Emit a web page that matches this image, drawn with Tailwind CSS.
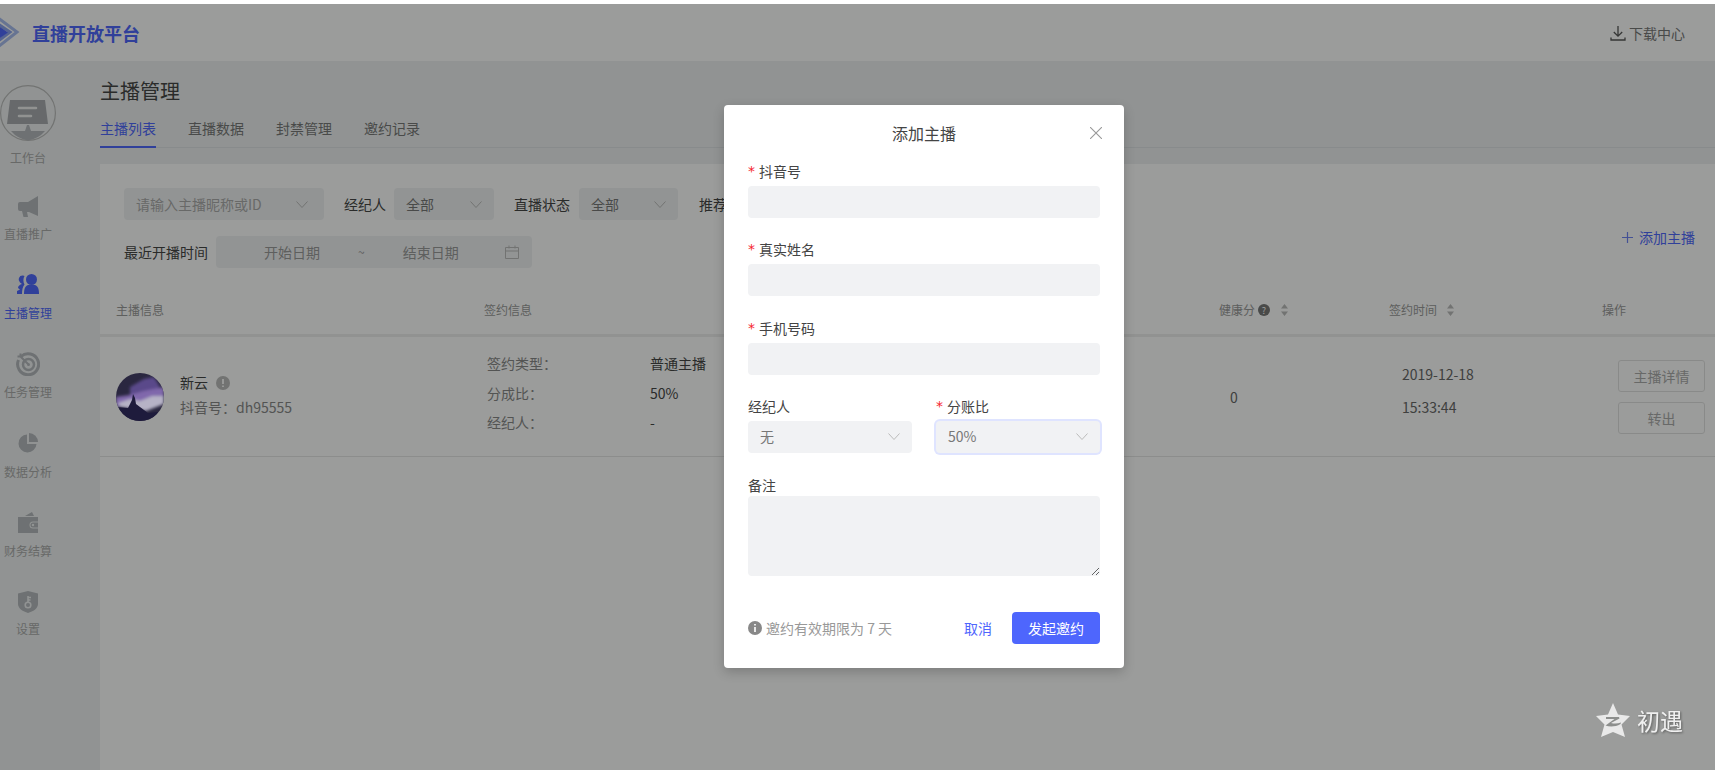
<!DOCTYPE html>
<html lang="zh-CN">
<head>
<meta charset="utf-8">
<title>直播开放平台</title>
<script src="https://cdn.jsdelivr.net/npm/@tailwindcss/browser@4"></script>
</head>
<body class="overflow-hidden bg-white font-['Noto_Sans_CJK_SC',sans-serif] text-sm text-[#444]">
<div class="relative mt-1 h-[766px] overflow-hidden bg-[#eef1f2]">

  <!-- header -->
  <header class="flex h-[57px] items-center bg-white">
    <svg class="h-[32px] w-[20px] shrink-0" viewBox="0 0 20 32" fill="none">
      <path d="M-2 1 L17 15 L-2 30" stroke="#a9bdf0" stroke-width="3"/>
      <path d="M-2 7 L10 15 L-2 24" stroke="#8aa2ee" stroke-width="3"/>
      <path d="M0 10 L8 15.500 L0 21z" fill="#4e66fd"/>
    </svg>
    <span class="ml-3 text-lg leading-none font-bold text-[#4e66fd]">直播开放平台</span>
    <div class="mr-[30px] ml-auto flex items-center gap-[3px] text-[#777]">
      <svg class="h-4 w-4" viewBox="0 0 16 16" fill="none" stroke="#555" stroke-width="1.300">
        <path d="M8 1v10M3.800 7 8 11.200 12.200 7M1 12.500v2.500h14v-2.500"/>
      </svg>
      <span>下载中心</span>
    </div>
  </header>

  <div class="flex h-[709px]">
    <!-- sidebar -->
    <aside class="w-[100px] shrink-0 text-xs leading-4 text-[#aaa]">
      <div class="flex w-[56px] flex-col items-center pt-6">
        <svg class="h-14 w-14" viewBox="0 0 56 56" fill="none">
          <circle cx="28" cy="28" r="27.400" stroke="#bbb" stroke-width="1.200"/>
          <path d="M11 46h14l2-6h2l2 6h14a27 27 0 0 1-17 9.400h-0a27 27 0 0 1-17-9.400z" fill="#b4b7bc"/>
          <path d="M10 15h35l3 24H7z" fill="#a8abb0"/>
          <path d="M19 23h17M19 31h12" stroke="#eee" stroke-width="2.500" stroke-linecap="round"/>
        </svg>
        <span class="mt-[9px]">工作台</span>

        <svg class="mt-[29px] h-[22px] w-5" viewBox="0 0 20 22" fill="#b4b7bc">
          <path d="M20 1v20l-9-4H9l1 5H5.500L4 16H2a2 2 0 0 1-2-2V9a2 2 0 0 1 2-2h8z"/>
        </svg>
        <span class="mt-[9px]">直播推广</span>

        <svg class="mt-[32px] h-[20px] w-[22px]" viewBox="0 0 22 20" fill="#4e66fd">
          <circle cx="14.500" cy="5.500" r="5.500"/>
          <path d="M7 20c0-5 1-8 4-9h7c3 1 4 4 4 9z"/>
          <path d="M6 1.500a4 4 0 0 0-3 7L5 10c-2 .5-4 2-4 4l2 1.500L0 17v3h5c0-4 .5-7 2.500-9.500C6 8 6 4.500 7.500 2c-.5-.3-1-.5-1.500-.5z"/>
        </svg>
        <span class="mt-[11px] text-[#4e66fd]">主播管理</span>

        <svg class="mt-[31px] h-6 w-6" viewBox="0 0 24 24" fill="none" stroke="#b4b7bc">
          <path d="M5 4.500A10.500 10.500 0 1 1 2.500 8" stroke-width="3"/>
          <circle cx="12.500" cy="12.500" r="5.500" stroke-width="2.500"/>
          <circle cx="12.500" cy="12.500" r="1.500" fill="#b4b7bc" stroke="none"/>
          <path d="M12 12 4 4M1.500 4.500h3v-3" stroke-width="2"/>
        </svg>
        <span class="mt-[8px]">任务管理</span>

        <svg class="mt-[33px] h-5 w-5" viewBox="0 0 20 20" fill="#b4b7bc">
          <path d="M9 1.500a9 9 0 1 0 9.500 9.500H9z"/>
          <path d="M11 0a9 9 0 0 1 9 9h-9z"/>
        </svg>
        <span class="mt-[11px]">数据分析</span>

        <svg class="mt-[32px] h-[21px] w-5" viewBox="0 0 20 21" fill="#b4b7bc">
          <path d="M7 4 14 0l2 4z"/>
          <path fill-rule="evenodd" d="M0 5h20v4.500h-5a3.500 3.500 0 0 0 0 7h5V21H0z"/>
          <path d="M15 10.500h5v5h-5a2.500 2.500 0 0 1 0-5zm0 1.300a1.200 1.200 0 1 0 0 2.400 1.200 1.200 0 0 0 0-2.400z" fill-rule="evenodd"/>
        </svg>
        <span class="mt-[10px]">财务结算</span>

        <svg class="mt-[32px] h-[22px] w-5" viewBox="0 0 20 22" fill="#b4b7bc">
          <path d="M10 0l10 2.500V13c0 4.500-5 7.500-10 9-5-1.500-10-4.500-10-9V2.500z"/>
          <circle cx="10" cy="14" r="2.800" fill="none" stroke="#eef1f2" stroke-width="1.600"/>
          <path d="M10 11V5M10 6.500h3M10 9h2.500" stroke="#eef1f2" stroke-width="1.600"/>
        </svg>
        <span class="mt-[8px]">设置</span>
      </div>
    </aside>

    <!-- main -->
    <main class="flex min-w-0 flex-1 flex-col">
      <h1 class="pt-4 text-xl leading-7 font-normal">主播管理</h1>
      <div class="mt-[13px] flex gap-8 border-b border-[#dfe3e6] leading-5 text-[#777]">
        <span class="-mb-px border-b-2 border-[#4e66fd] pb-2 text-[#4e66fd]">主播列表</span>
        <span>直播数据</span>
        <span>封禁管理</span>
        <span>邀约记录</span>
      </div>

      <section class="mt-4 flex-1 bg-white">
        <div class="flex items-center px-6 pt-6">
          <div class="flex h-8 w-[200px] items-center justify-between rounded bg-[#f1f2f4] pr-4 pl-3 text-[#aaa]">
            <span>请输入主播昵称或ID</span>
            <svg class="h-[7px] w-3" viewBox="0 0 12 7" fill="none" stroke="#bbb"><path d="M.5.500 6 6.500 11.500.500"/></svg>
          </div>
          <span class="ml-5">经纪人</span>
          <div class="ml-2 flex h-8 w-[100px] items-center justify-between rounded bg-[#f1f2f4] pr-3 pl-3 text-[#777]">
            <span>全部</span>
            <svg class="h-[7px] w-3" viewBox="0 0 12 7" fill="none" stroke="#bbb"><path d="M.5.500 6 6.500 11.500.500"/></svg>
          </div>
          <span class="ml-5">直播状态</span>
          <div class="ml-[9px] flex h-8 w-[99px] items-center justify-between rounded bg-[#f1f2f4] pr-3 pl-3 text-[#777]">
            <span>全部</span>
            <svg class="h-[7px] w-3" viewBox="0 0 12 7" fill="none" stroke="#bbb"><path d="M.5.500 6 6.500 11.500.500"/></svg>
          </div>
          <span class="ml-[21px]">推荐状态</span>
        </div>
        <div class="mt-4 flex items-center pr-5 pl-6">
          <span>最近开播时间</span>
          <div class="ml-2 flex h-8 w-[316px] items-center rounded bg-[#f1f2f4] pl-12 text-[#999]">
            <span>开始日期</span>
            <span class="ml-[38px] text-xs">~</span>
            <span class="ml-[38px]">结束日期</span>
            <svg class="ml-[46px] h-[14px] w-[14px]" viewBox="0 0 14 14" fill="none" stroke="#bbb"><path d="M.5 2.500h13v11H.5zM.5 6h13M4 .5v3M10 .5v3"/></svg>
          </div>
          <div class="-mt-[30px] ml-auto flex items-center gap-[6px] text-[#4e66fd]">
            <svg class="h-[11px] w-[11px]" viewBox="0 0 11 11" fill="none" stroke="#6f82f5" stroke-width="1.200"><path d="M5.500 0v11M0 5.500h11"/></svg>
            <span>添加主播</span>
          </div>
        </div>

        <!-- table head -->
        <div class="mt-[17px] flex h-[52px] items-center border-b-[3px] border-[#eee] pl-4 text-xs text-[#999]">
          <span class="w-[368px]">主播信息</span>
          <span class="w-[735px]">签约信息</span>
          <span class="flex w-[170px] items-center">健康分
            <svg class="ml-[3px] h-3 w-3" viewBox="0 0 12 12"><circle cx="6" cy="6" r="6" fill="#777"/><text x="6" y="9.500" font-size="9" fill="#fff" text-anchor="middle">?</text></svg>
            <svg class="ml-[11px] h-3 w-[7px]" viewBox="0 0 7 12" fill="#bbb"><path d="M3.500 0 7 4.500H0zM0 7.500h7L3.500 12z"/></svg>
          </span>
          <span class="flex w-[213px] items-center">签约时间
            <svg class="ml-[10px] h-3 w-[7px]" viewBox="0 0 7 12" fill="#bbb"><path d="M3.500 0 7 4.500H0zM0 7.500h7L3.500 12z"/></svg>
          </span>
          <span>操作</span>
        </div>

        <!-- table row -->
        <div class="flex h-[120px] items-center border-b border-[#e6e6e6] pl-4">
          <div class="flex w-[368px] items-center gap-4">
            <svg class="relative z-20 h-12 w-12 rounded-full" viewBox="0 0 48 48">
              <defs><filter id="soft"><feGaussianBlur stdDeviation="1.600"/></filter></defs>
              <rect width="48" height="48" fill="#2a2740"/>
              <g filter="url(#soft)">
                <path d="M14 14 28 6 38 4l6 10-10 6-12 2-8 4z" fill="#5a4a8a"/>
                <path d="M0 24 14 22l14-4 20-4v14l-16 6-14-1-18 1z" fill="#8068ac"/>
                <path d="M2 30 14 26l10 2 12-5 12 0v8L30 38 4 34z" fill="#b6b2c6"/>
              </g>
              <path d="M0 34 12 35 16 27l1-6 2 4 1 6 12 9 10-1-6 9H0z" fill="#1e1b3c"/>
            </svg>
            <div class="-mt-[3px] leading-[25px]">
              <div class="flex items-center gap-2">
                <span>新云</span>
                <svg class="h-[14px] w-[14px]" viewBox="0 0 14 14"><circle cx="7" cy="7" r="7" fill="#bbb"/><path d="M7 3v5M7 9.500v1.500" stroke="#fff" stroke-width="1.800"/></svg>
              </div>
              <div class="text-[#888]">抖音号<span class="font-['Noto_Sans_CJK_TC']">：</span>dh95555</div>
            </div>
          </div>
          <div class="-mt-[6px] w-[735px] pl-[3px] leading-[29.500px]">
            <div class="flex"><span class="w-[163px] text-[#888]">签约类型<span class="font-['Noto_Sans_CJK_TC']">：</span></span><span>普通主播</span></div>
            <div class="flex"><span class="w-[163px] text-[#888]">分成比<span class="font-['Noto_Sans_CJK_TC']">：</span></span><span>50%</span></div>
            <div class="flex"><span class="w-[163px] text-[#888]">经纪人<span class="font-['Noto_Sans_CJK_TC']">：</span></span><span>-</span></div>
          </div>
          <span class="w-[170px] pl-[11px] text-[#666]">0</span>
          <div class="-mt-3 w-[213px] pl-[13px] leading-[33px] text-[#666]">
            <div>2019-12-18</div>
            <div>15:33:44</div>
          </div>
          <div class="flex flex-col gap-[10px] pl-4">
            <button class="h-8 w-[87px] rounded-[3px] border border-[#e2e2e2] text-[#aaa]">主播详情</button>
            <button class="h-8 w-[87px] rounded-[3px] border border-[#e2e2e2] text-[#aaa]">转出</button>
          </div>
        </div>
      </section>
    </main>
  </div>

  <!-- mask -->
  <div class="absolute inset-0 z-10 bg-[rgba(5,8,5,0.4)]"></div>

  <!-- dialog -->
  <div class="absolute top-[101px] left-[724px] z-20 w-[400px] rounded bg-white px-6 pb-6 shadow-[0_4px_12px_rgba(0,0,0,0.2)]">
    <div class="relative -mx-6 flex h-14 items-center justify-center text-base">
      添加主播
      <svg class="absolute right-[22px] h-3 w-3" viewBox="0 0 12 12" fill="none" stroke="#999" stroke-width="1.100"><path d="M0 0l12 12M12 0 0 12"/></svg>
    </div>

    <label class="flex h-5 items-center"><span class="w-[11px] font-['DejaVu_Sans'] text-[#f5222d]">*</span>抖音号</label>
    <input class="mt-[5px] block h-8 w-full rounded bg-[#f1f2f4]" type="text">

    <label class="mt-[21px] flex h-5 items-center"><span class="w-[11px] font-['DejaVu_Sans'] text-[#f5222d]">*</span>真实姓名</label>
    <input class="mt-[5px] block h-8 w-full rounded bg-[#f1f2f4]" type="text">

    <label class="mt-[22px] flex h-5 items-center"><span class="w-[11px] font-['DejaVu_Sans'] text-[#f5222d]">*</span>手机号码</label>
    <input class="mt-[5px] block h-8 w-full rounded bg-[#f1f2f4]" type="text">

    <div class="mt-[21px] flex gap-6">
      <div class="w-[164px]">
        <div class="flex h-5 items-center">经纪人</div>
        <div class="mt-[5px] flex h-8 items-center justify-between rounded bg-[#f1f2f4] px-3 pb-0.5 text-[#777]">
          <span>无</span>
          <svg class="h-[7px] w-3" viewBox="0 0 12 7" fill="none" stroke="#bbb"><path d="M.5.500 6 6.500 11.500.500"/></svg>
        </div>
      </div>
      <div class="w-[164px]">
        <div class="flex h-5 items-center"><span class="w-[11px] font-['DejaVu_Sans'] text-[#f5222d]">*</span>分账比</div>
        <div class="mt-[5px] flex h-8 items-center justify-between rounded bg-[#f1f2f4] px-3 pb-0.5 text-[#777] ring-2 ring-[#dfe4ff]">
          <span>50%</span>
          <svg class="h-[7px] w-3" viewBox="0 0 12 7" fill="none" stroke="#bbb"><path d="M.5.500 6 6.500 11.500.500"/></svg>
        </div>
      </div>
    </div>

    <label class="mt-[22px] block h-5 leading-5">备注</label>
    <textarea class="mt-px block h-20 w-full rounded bg-[#f1f2f4]"></textarea>

    <div class="mt-9 flex items-center">
      <svg class="h-[14px] w-[14px]" viewBox="0 0 14 14"><circle cx="7" cy="7" r="7" fill="#888"/><path d="M7 6v5M7 3v1.600" stroke="#fff" stroke-width="1.600"/></svg>
      <span class="ml-1 text-[#999]">邀约有效期限为 7 天</span>
      <span class="mr-5 ml-auto text-[#4e66fd]">取消</span>
      <button class="h-8 w-[88px] rounded bg-[#4e66fd] text-white">发起邀约</button>
    </div>
  </div>

  <!-- watermark -->
  <div class="absolute top-[699px] left-[1596px] z-20 flex items-center gap-[7px]">
    <svg class="h-[34px] w-[34px]" viewBox="0 0 34 34">
      <path d="M17 0l5 11.500 12 1.500-8.500 8.500L29 34l-12-5-12 5 3.500-12.500L0 13l12-1.500z" fill="#e9e9e9"/>
      <path d="M10 14h13l.5 1.500L15 20c4 1 7 .5 10-.5l-.5 1.500c-5 3-11 3-15 1.500l9-6.500H10z" fill="#8d8f8d"/>
    </svg>
    <span class="text-[23px] leading-8 text-[#f0f0f0] drop-shadow-[1px_1px_1px_rgba(0,0,0,0.4)]">初遇</span>
  </div>
</div>
</body>
</html>
